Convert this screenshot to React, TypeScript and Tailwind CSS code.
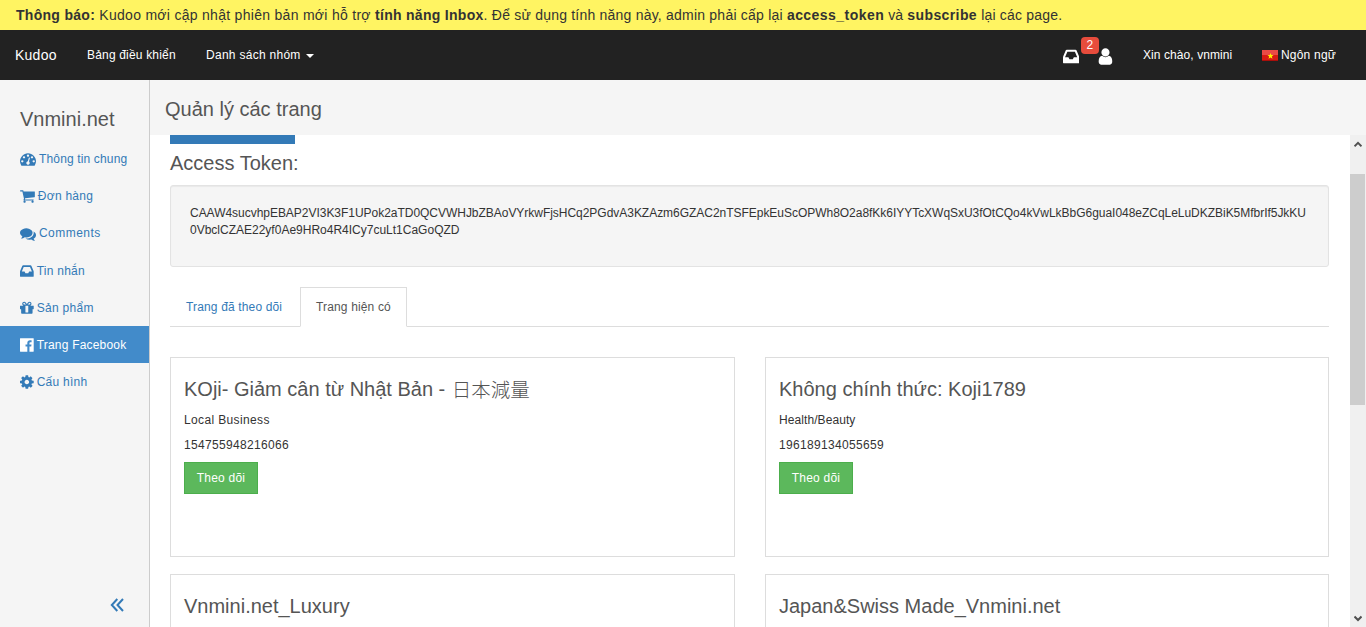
import React from "react";

const dot = "q0-53-37.5-90.5t-90.5-37.5-90.5 37.5-37.5 90.5 37.5 90.5 90.5 37.5 90.5-37.5 37.5-90.5z";

const paths = {
  dashboard:
    "M384 1152" + dot + "M576 704" + dot +
    "M1004 1185l101-382q6-26-7.5-48.5t-38.5-29.5-48 6.5-30 39.5l-101 382q-60 5-107 43.5t-63 98.5q-20 77 20 146t117 89 146-20 89-117q16-60-6-117t-72-91z" +
    "M1664 1152" + dot + "M1024 512" + dot + "M1472 704" + dot +
    "M1792 1152q0 261-141 483-19 29-54 29h-1402q-35 0-54-29-141-221-141-483 0-182 71-348t191-286 286-191 348-71 348 71 286 191 191 286 71 348z",
  cart: "M640 1536q0 52-38 90t-90 38-90-38-38-90 38-90 90-38 90 38 38 90zm896 0q0 52-38 90t-90 38-90-38-38-90 38-90 90-38 90 38 38 90zm128-1088v512q0 24-16.5 42.5t-40.5 21.5l-1044 122q13 60 13 70 0 16-24 64h920q26 0 45 19t19 45-19 45-45 19h-1024q-26 0-45-19t-19-45q0-11 8-31.5t16-36 21.5-40 15.5-29.5l-177-823h-204q-26 0-45-19t-19-45 19-45 45-19h256q16 0 28.5 6.5t19.5 15.5 13 24.5 8 26 5.5 29.5 4.5 26h1201q26 0 45 19t19 45z",
  comments:
    "M1408 768q0 139-94 257t-256.5 186.5-353.5 68.5q-86 0-176-16-124 88-278 128-36 9-86 16h-3q-11 0-20.5-8t-11.5-21q-1-3-1-6.5t.5-6.5 2-6l2.5-5 3.5-5.5 4-5 4.5-5 4-4.5q5-6 23-25t26-29.5 22.5-29 25-38.5 20.5-44q-124-72-195-177t-71-224q0-139 94-257t256.5-186.5 353.5-68.5 353.5 68.5 256.5 186.5 94 257zm384 256q0 120-71 224.5t-195 176.5q10 24 20.5 44t25 38.5 22.5 29 26 29.5 23 25q1 1 4 4.5t4.5 5 4 5 3.5 5.5l2.5 5 2 6 .5 6.5-1 6.5q-3 14-13 22t-22 7q-50-7-86-16-154-40-278-128-90 16-176 16-271 0-472-132 58 4 88 4 161 0 309-45t264-129q125-92 192-212t67-254q0-77-23-152 129 71 204 178t75 230z",
  inbox:
    "M1023 960h316q-1-3-2.5-8.5t-2.5-8.5l-212-496H414L202 943q-1 3-2.5 8.5T197 960h316l95 192h320zm513 30v482q0 26-19 45t-45 19H64q-26 0-45-19t-19-45V990q0-62 25-123l238-552q10-25 36.5-42t52.5-17h832q26 0 52.5 17t36.5 42l238 552q25 61 25 123z",
  gift: "M1056 1356v-716h-320v716q0 25 18 38.5t46 13.5h192q28 0 46-13.5t18-38.5zm-456-844h195l-126-161q-26-31-69-31-40 0-68 28t-28 68 28 68 68 28zm688-96q0-40-28-68t-68-28q-43 0-69 31l-125 161h194q40 0 68-28t28-68zm376 256v320q0 14-9 23t-23 9h-96v416q0 40-28 68t-68 28h-1088q-40 0-68-28t-28-68v-416h-96q-14 0-23-9t-9-23v-320q0-14 9-23t23-9h440q-93 0-158.5-65.5t-65.5-158.5 65.5-158.5 158.5-65.5q107 0 168 77l128 165 128-165q61-77 168-77 93 0 158.5 65.5t65.5 158.5-65.5 158.5-158.5 65.5h440q14 0 23 9t9 23z",
  facebook:
    "M1579 128q35 0 60 25t25 60v1366q0 35-25 60t-60 25h-391v-595h199l30-232h-229v-148q0-56 23.5-84t91.5-28l122-1v-207q-63-9-178-9-136 0-217.5 80t-81.5 226v171h-200v232h200v595h-735q-35 0-60-25t-25-60v-1366q0-35 25-60t60-25h1366z",
  cog: "M1152 896q0-106-75-181t-181-75-181 75-75 181 75 181 181 75 181-75 75-181zm512-109v222q0 12-8 23t-20 13l-185 28q-19 54-39 91 35 50 107 138 10 12 10 25t-9 23q-27 37-99 108t-94 71q-12 0-26-9l-138-108q-44 23-91 38-16 136-29 186-7 28-36 28h-222q-14 0-24.5-8.5t-11.5-21.5l-28-184q-49-16-90-37l-141 107q-10 9-25 9-14 0-25-11-126-114-165-168-7-10-7-23 0-12 8-23 15-21 51-66.5t54-70.5q-27-50-41-99l-183-27q-13-2-21-12.5t-8-23.5v-222q0-12 8-23t19-13l186-28q14-46 39-92-40-57-107-138-10-12-10-24 0-10 9-23 26-36 98.5-107.5t94.5-71.5q13 0 26 10l138 107q44-23 91-38 16-136 29-186 7-28 36-28h222q14 0 24.5 8.5t11.5 21.5l28 184q49 16 90 37l142-107q9-9 24-9 13 0 25 10 129 119 165 170 7 8 7 22 0 12-8 23-15 21-51 66.5t-54 70.5q26 50 41 98l183 28q13 2 21 12.5t8 23.5z",
  user: "M1536 1399q0 109-62.5 187t-150.5 78h-854q-88 0-150.5-78t-62.5-187q0-85 8.5-160.5t31.5-152 58.5-131 94-89 134.5-34.5q131 128 313 128t313-128q76 0 134.5 34.5t94 89 58.5 131 31.5 152 8.5 160.5zm-256-887q0 159-112.5 271.5t-271.5 112.5-271.5-112.5-112.5-271.5 112.5-271.5 271.5-112.5 271.5 112.5 112.5 271.5z",
};

type IconName = keyof typeof paths;

const boxes: Record<IconName, { x: number; w: number }> = {
  dashboard: { x: 0, w: 1792 },
  cart: { x: 0, w: 1664 },
  comments: { x: 0, w: 1792 },
  inbox: { x: 0, w: 1536 },
  gift: { x: 128, w: 1536 },
  facebook: { x: 128, w: 1536 },
  cog: { x: 128, w: 1536 },
  user: { x: 192, w: 1408 },
};

function Icon({ name, size = 16 }: { name: IconName; size?: number }) {
  const { x, w } = boxes[name];
  return (
    <svg
      className="shrink-0"
      width={(w / 1792) * size}
      height={size}
      viewBox={`${x} 0 ${w} 1792`}
      fill="currentColor"
      aria-hidden="true"
    >
      <path d={paths[name]} fillRule={name === "dashboard" ? "evenodd" : "nonzero"} />
    </svg>
  );
}

const menu: { icon: IconName; label: string; tracking: string; active?: boolean }[] = [
  { icon: "dashboard", label: "Thông tin chung", tracking: "tracking-[0.15px]" },
  { icon: "cart", label: "Đơn hàng", tracking: "tracking-[0.25px]" },
  { icon: "comments", label: "Comments", tracking: "tracking-[0.45px]" },
  { icon: "inbox", label: "Tin nhắn", tracking: "tracking-[0.25px]" },
  { icon: "gift", label: "Sản phẩm", tracking: "tracking-[0.3px]" },
  { icon: "facebook", label: "Trang Facebook", tracking: "tracking-[0.2px]", active: true },
  { icon: "cog", label: "Cấu hình", tracking: "tracking-[0.25px]" },
];

const pages = [
  {
    name: "KOji- Giảm cân từ Nhật Bản - ",
    cjk: "日本減量",
    kind: "Local Business",
    kindTracking: "tracking-[0.36px]",
    id: "154755948216066",
  },
  {
    name: "Không chính thức: Koji1789",
    kind: "Health/Beauty",
    kindTracking: "tracking-[0.08px]",
    id: "196189134055659",
  },
  { name: "Vnmini.net_Luxury" },
  { name: "Japan&Swiss Made_Vnmini.net" },
];

function Flag() {
  return (
    <svg className="mt-px shrink-0" width="16" height="11" viewBox="0 0 16 11" aria-hidden="true">
      <rect width="16" height="11" fill="#d81a14" />
      <rect width="16" height="5" fill="#ec4a45" />
      <rect y="10" width="16" height="1" fill="#a80f0b" />
      <path d="M8.500 3l.8 2.100h2.200L9.800 6.500l.7 2.300-2-1.400-2 1.400.7-2.300-1.700-1.400h2.200z" fill="#fff200" />
    </svg>
  );
}

export default function App() {
  return (
    <div className="flex h-[627px] w-[1366px] flex-col overflow-hidden bg-white font-['Liberation_Sans',Arial,sans-serif] text-[12px] leading-[17px] text-[#333]">
      <div className="h-[30px] shrink-0 bg-[#fff462] pl-4 text-[14px] leading-[30px] tracking-[0.29px] whitespace-nowrap">
        <b>Thông báo:</b> Kudoo mới cập nhật phiên bản mới hỗ trợ <b>tính năng Inbox</b>
        <span className="tracking-[0.215px]">. Để sử dụng tính năng này, admin phải cấp lại </span>
        <b className="tracking-[0.45px]">access_token</b>
        <span className="tracking-[0.15px]"> và </span>
        <b className="tracking-[0.4px]">subscribe</b>
        <span className="tracking-[0.2px]"> lại các page.</span>
      </div>

      <nav className="flex h-[50px] shrink-0 items-center bg-[#222] pr-[30px] pl-[15px] whitespace-nowrap text-white">
        <span className="w-[42px] text-[14px] tracking-[0.25px]">Kudoo</span>
        <span className="ml-[30px] w-[89px] tracking-[0.18px]">Bảng điều khiển</span>
        <span className="ml-[30px] flex items-center tracking-[0.28px]">
          Danh sách nhóm
          <svg className="mt-[2px] ml-[5px]" width="8" height="4" viewBox="0 0 8 4" fill="currentColor">
            <path d="M0 0h8L4 4z" />
          </svg>
        </span>
        <div className="ml-auto flex items-center">
          <span className="relative mt-[2px] flex">
            <Icon name="inbox" size={19} />
            <span className="absolute -top-[10px] left-[18px] flex h-[17px] w-[18px] items-center justify-center rounded-[4px] bg-[#e74c3c] text-[12px]">
              2
            </span>
          </span>
          <span className="mt-[2px] ml-[19px] flex">
            <Icon name="user" size={19} />
          </span>
          <span className="ml-[30px] w-[89px] tracking-[0.08px]">Xin chào, vnmini</span>
          <span className="ml-[30px] flex items-center gap-[3px]">
            <Flag />
            <span className="w-[55px] tracking-[0.2px]">Ngôn ngữ</span>
          </span>
        </div>
      </nav>

      <div className="flex min-h-0 flex-1">
        <aside className="flex w-[150px] shrink-0 flex-col border-r border-[#ccc] bg-[#f5f5f5] text-[#337ab7]">
          <h1 className="mt-[27px] mb-[9.300px] pl-5 text-[20px] leading-6 text-[#555]">Vnmini.net</h1>
          <ul>
            {menu.map((m) => (
              <li
                key={m.label}
                className={
                  m.active
                    ? "flex h-[37.140px] items-center gap-[3px] bg-[#428bca] pl-5 whitespace-nowrap text-white"
                    : "flex h-[37.140px] items-center gap-[3px] pl-5 whitespace-nowrap"
                }
              >
                <span className="mt-px flex">
                  <Icon name={m.icon} />
                </span>
                <span className={`pt-[1.640px] ${m.tracking}`}>{m.label}</span>
              </li>
            ))}
          </ul>
          <svg className="mt-auto mr-[25px] mb-[15px] self-end" width="14" height="14" viewBox="0 0 14 14" fill="none" stroke="currentColor" strokeWidth="2">
            <path d="M7.300 1L1.800 7l5.500 6M13 1L7.500 7l5.500 6" />
          </svg>
        </aside>

        <main className="flex min-w-0 flex-1 flex-col">
          <header className="h-[55px] shrink-0 bg-[#f5f5f5] pt-[17px] pl-[15px] text-[20px] leading-6 text-[#555]">
            Quản lý các trang
          </header>
          <div className="flex min-h-0 flex-1">
            <section className="min-w-0 flex-1 overflow-hidden pr-[21px] pl-5">
              <div className="h-[9px] w-[125px] bg-[#337ab7]" />
              <h2 className="mt-[7px] text-[20px] leading-6 text-[#555]">Access Token:</h2>
              <div className="mt-[10px] h-[82px] rounded-[3px] border border-[#e3e3e3] bg-[#f5f5f5] px-[19px] pt-[19px] whitespace-nowrap shadow-[inset_0_1px_1px_rgba(0,0,0,0.05)]">
                <p className="tracking-[-0.03px]">
                  CAAW4sucvhpEBAP2VI3K3F1UPok2aTD0QCVWHJbZBAoVYrkwFjsHCq2PGdvA3KZAzm6GZAC2nTSFEpkEuScOPWh8O2a8fKk6IYYTcXWqSxU3fOtCQo4kVwLkBbG6guaI048eZCqLeLuDKZBiK5MfbrIf5JkKU
                </p>
                <p>0VbclCZAE22yf0Ae9HRo4R4ICy7cuLt1CaGoQZD</p>
              </div>

              <div className="mt-5 flex h-10 border-b border-[#ddd] tracking-[0.15px]">
                <span className="flex h-10 w-[130px] items-center pl-4 whitespace-nowrap text-[#337ab7]">Trang đã theo dõi</span>
                <span className="flex h-10 w-[107px] items-center border border-[#ddd] border-b-white bg-white pl-[15px] whitespace-nowrap text-[#555]">
                  Trang hiện có
                </span>
              </div>

              <div className="mt-[30px] grid grid-cols-[565px_564px] gap-x-[30px] gap-y-[17px]">
                {pages.map((p) => (
                  <article key={p.name} className="h-[200px] border border-[#ddd] px-[13px] pt-[19px]">
                    <h3 className="flex h-6 items-start text-[20px] leading-6 whitespace-pre text-[#555]">
                      <span>{p.name}</span>
                      {p.cjk && (
                        <span className="ml-[1px] font-['Noto_Sans_CJK_JP',sans-serif] text-[19.500px] leading-[23px] font-light">
                          {p.cjk}
                        </span>
                      )}
                    </h3>
                    {p.kind && (
                      <>
                        <p className={`mt-[11px] ${p.kindTracking}`}>{p.kind}</p>
                        <p className="mt-2 tracking-[0.33px]">{p.id}</p>
                        <button className="mt-[8px] flex h-8 w-[74px] items-center justify-center border border-[#4cae4c] bg-[#5cb85c] tracking-[0.2px] text-white">
                          Theo dõi
                        </button>
                      </>
                    )}
                  </article>
                ))}
              </div>
            </section>

            <div className="flex w-4 shrink-0 flex-col items-center bg-[#f0f0f0] text-[#505050]">
              <svg className="mt-[6px] h-[7px] w-2 shrink-0" viewBox="0 0 8 7" fill="none" stroke="currentColor" strokeWidth="2">
                <path d="M.5 5.300L4 1.800 7.500 5.300" />
              </svg>
              <div className="mt-[26px] mr-px h-[231px] w-[15px] shrink-0 bg-[#cdcdcd]" />
              <svg className="mt-auto mb-[5px] h-[7px] w-2 shrink-0" viewBox="0 0 8 7" fill="none" stroke="currentColor" strokeWidth="2">
                <path d="M.5 1.500L4 5 7.500 1.500" />
              </svg>
            </div>
          </div>
        </main>
      </div>
    </div>
  );
}
